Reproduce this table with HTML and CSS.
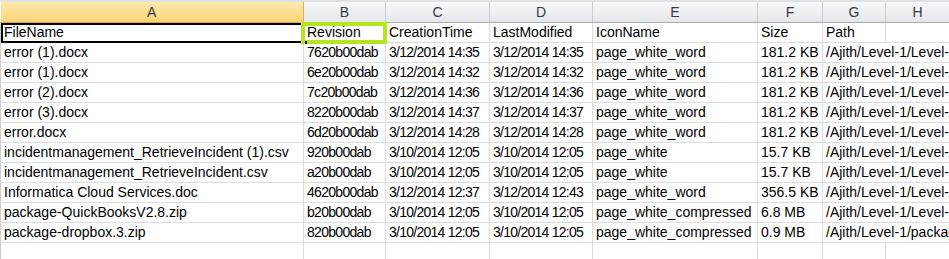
FILE: index.html
```html
<!DOCTYPE html>
<html>
<head>
<meta charset="utf-8">
<link rel="stylesheet" href="styles.css">
</head>
<body>
<div class="sheet">
  <table class="grid">
    <colgroup>
      <col class="c-a"><col class="c-b"><col class="c-c"><col class="c-d"><col class="c-e"><col class="c-f"><col class="c-g"><col class="c-h"><col class="c-i">
    </colgroup>
    <thead>
      <tr>
        <th class="hd sel">A</th><th class="hd">B</th><th class="hd">C</th><th class="hd">D</th><th class="hd">E</th><th class="hd">F</th><th class="hd">G</th><th class="hd">H</th><th class="hd"></th>
      </tr>
    </thead>
    <tbody>
      <tr><td class="active">FileName</td><td class="hl">Revision</td><td>CreationTime</td><td>LastModified</td><td>IconName</td><td>Size</td><td>Path</td><td></td><td></td></tr>
      <tr><td>error (1).docx</td><td class="num">7620b00dab</td><td class="dt">3/12/2014 14:35</td><td class="dt">3/12/2014 14:35</td><td>page_white_word</td><td>181.2 KB</td><td class="ov">/Ajith/Level-1/Level-2/error (1).docx</td><td></td><td></td></tr>
      <tr><td>error (1).docx</td><td class="num">6e20b00dab</td><td class="dt">3/12/2014 14:32</td><td class="dt">3/12/2014 14:32</td><td>page_white_word</td><td>181.2 KB</td><td class="ov">/Ajith/Level-1/Level-2/error (1).docx</td><td></td><td></td></tr>
      <tr><td>error (2).docx</td><td class="num">7c20b00dab</td><td class="dt">3/12/2014 14:36</td><td class="dt">3/12/2014 14:36</td><td>page_white_word</td><td>181.2 KB</td><td class="ov">/Ajith/Level-1/Level-2/error (2).docx</td><td></td><td></td></tr>
      <tr><td>error (3).docx</td><td class="num">8220b00dab</td><td class="dt">3/12/2014 14:37</td><td class="dt">3/12/2014 14:37</td><td>page_white_word</td><td>181.2 KB</td><td class="ov">/Ajith/Level-1/Level-2/error (3).docx</td><td></td><td></td></tr>
      <tr><td>error.docx</td><td class="num">6d20b00dab</td><td class="dt">3/12/2014 14:28</td><td class="dt">3/12/2014 14:28</td><td>page_white_word</td><td>181.2 KB</td><td class="ov">/Ajith/Level-1/Level-2/error.docx</td><td></td><td></td></tr>
      <tr><td>incidentmanagement_RetrieveIncident (1).csv</td><td class="num">920b00dab</td><td class="dt">3/10/2014 12:05</td><td class="dt">3/10/2014 12:05</td><td>page_white</td><td>15.7 KB</td><td class="ov">/Ajith/Level-1/Level-2/incident.csv</td><td></td><td></td></tr>
      <tr><td>incidentmanagement_RetrieveIncident.csv</td><td class="num">a20b00dab</td><td class="dt">3/10/2014 12:05</td><td class="dt">3/10/2014 12:05</td><td>page_white</td><td>15.7 KB</td><td class="ov">/Ajith/Level-1/Level-2/incident.csv</td><td></td><td></td></tr>
      <tr><td>Informatica Cloud Services.doc</td><td class="num">4620b00dab</td><td class="dt">3/12/2014 12:37</td><td class="dt">3/12/2014 12:43</td><td>page_white_word</td><td>356.5 KB</td><td class="ov">/Ajith/Level-1/Level-2/Informatica.doc</td><td></td><td></td></tr>
      <tr><td>package-QuickBooksV2.8.zip</td><td class="num">b20b00dab</td><td class="dt">3/10/2014 12:05</td><td class="dt">3/10/2014 12:05</td><td>page_white_compressed</td><td>6.8 MB</td><td class="ov">/Ajith/Level-1/Level-2/package.zip</td><td></td><td></td></tr>
      <tr><td>package-dropbox.3.zip</td><td class="num">820b00dab</td><td class="dt">3/10/2014 12:05</td><td class="dt">3/10/2014 12:05</td><td>page_white_compressed</td><td>0.9 MB</td><td class="ov">/Ajith/Level-1/package-dropbox.3.zip</td><td></td><td></td></tr>
      <tr><td></td><td></td><td></td><td></td><td></td><td></td><td></td><td></td><td></td></tr>
    </tbody>
  </table>
</div>
</body>
</html>
```
FILE: styles.css
```css
html, body {
  margin: 0;
  padding: 0;
  background: #ffffff;
  overflow: hidden;
}
.sheet {
  width: 949px;
  height: 259px;
  overflow: hidden;
  border-top: 2px solid #dfe1e5;
  box-sizing: border-box;
}
.grid {
  table-layout: fixed;
  border-collapse: collapse;
  width: 1013px;
  font-family: "Liberation Sans", Arial, sans-serif;
  font-size: 14px;
  color: #000;
}
.c-a { width: 303px; }
.c-b { width: 82px; }
.c-c { width: 104px; }
.c-d { width: 103px; }
.c-e { width: 165px; }
.c-f { width: 65px; }
.c-g { width: 63px; }
.c-h { width: 64px; }
.c-i { width: 64px; }
.hd {
  height: 20px;
  padding: 0;
  font-weight: normal;
  font-size: 14px;
  text-align: center;
  color: #333a44;
  background: linear-gradient(#f7f8fa, #e3e6ea);
  border-left: 1px solid #c9ccd1;
  border-right: 1px solid #c9ccd1;
  border-bottom: 1px solid #a7abb0;
  line-height: 20px;
}
.hd.sel {
  background: linear-gradient(#fde9b0, #f9d475);
  border-left: none;
  border-right: 1px solid #e0b04c;
  border-bottom: 1px solid #e2a53a;
}
td {
  height: 19px;
  padding: 0 3px;
  line-height: 19px;
  white-space: nowrap;
  overflow: hidden;
  border: 1px solid #dadcdd;
  vertical-align: bottom;
}
td.num {
  letter-spacing: -0.7px;
}
td.dt {
  letter-spacing: -0.75px;
}
td.ov {
  overflow: visible;
  border-right-style: hidden;
}
tbody tr td:first-child {
  border-left: 1px solid #c9ccd1;
}
td.active {
  position: relative;
  outline: 2px solid #000;
  outline-offset: -2px;
  overflow: visible;
}
td.hl {
  position: relative;
  overflow: visible;
}
td.hl::before {
  content: "";
  position: absolute;
  left: -3px;
  top: -1px;
  right: -2px;
  bottom: -2px;
  border: 4px solid #b5e61d;
}
td.hl::after {
  content: "";
  position: absolute;
  left: 1px;
  bottom: -2px;
  width: 2px;
  height: 3px;
  background: #000;
}
```
